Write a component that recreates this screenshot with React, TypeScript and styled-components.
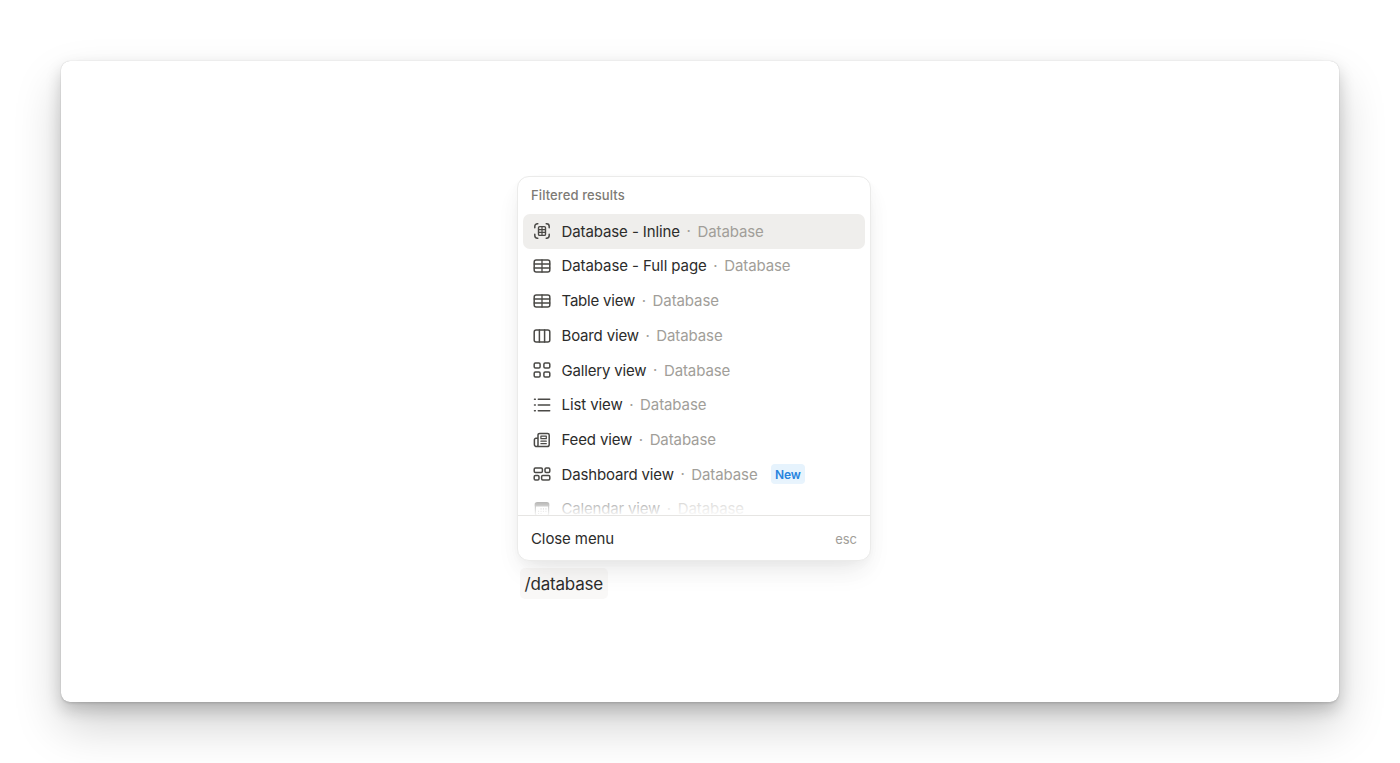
import React from "react";
import styled, { createGlobalStyle } from "styled-components";

const GlobalStyle = createGlobalStyle`
  * { box-sizing: border-box; }
  html, body { margin: 0; padding: 0; background: #fff; overflow: hidden; }
  body { font-family: Inter, "Liberation Sans", sans-serif; color: #2c2c2b; }
`;

const Page = styled.main`
  height: 763px;
  padding: 61px 61px 61px;
  overflow: hidden;
`;

const Window = styled.section`
  height: 641px;
  padding: 115px 0 0 456px;
  border-radius: 9px;
  background: #fff;
  box-shadow: 0 0 1px rgba(0, 0, 0, 0.26), 0 2px 2px rgba(0, 0, 0, 0.07), 0 8px 16px rgba(0, 0, 0, 0.18),
    0 24px 48px rgba(0, 0, 0, 0.18);
`;

const Menu = styled.div`
  display: flex;
  flex-direction: column;
  width: 354px;
  height: 385px;
  border: 1px solid #ebebea;
  border-radius: 12px;
  background: #fff;
  overflow: hidden;
  box-shadow: 0 14px 28px -6px rgba(0, 0, 0, 0.08), 0 4px 12px -2px rgba(0, 0, 0, 0.035),
    0 10px 30px rgba(0, 0, 0, 0.02);
`;

const Results = styled.div`
  position: relative;
  height: 338px;
  padding: 0 5px;
  overflow: hidden;
`;

const Heading = styled.div`
  height: 37px;
  padding: 10px 8px 0;
  font-size: 13px;
  line-height: 17px;
  font-weight: 500;
  letter-spacing: 0.1px;
  color: #7d7a75;
`;

const Row = styled.div<{ $active?: boolean }>`
  display: flex;
  align-items: center;
  height: 34.72px;
  padding: 0 10px;
  border-radius: 7px;
  background: ${(p) => (p.$active ? "#efeeec" : "transparent")};
  font-size: 15px;
  line-height: 20px;
  white-space: nowrap;
`;

const Glyph = styled.svg`
  width: 18px;
  height: 18px;
  margin-right: 10.5px;
  flex: none;
  fill: none;
  stroke: #4a4946;
  stroke-width: 1.5;
  stroke-linecap: round;
  stroke-linejoin: round;
`;

const Label = styled.span<{ $spacing: number }>`
  padding-top: 0.6px;
  letter-spacing: ${(p) => p.$spacing}px;
`;

const Dot = styled.span`
  width: 17.5px;
  text-align: center;
  color: #a19e99;
`;

const Kind = styled.span`
  padding-top: 0.6px;
  color: #a19e99;
  letter-spacing: -0.1px;
`;

const Badge = styled.span`
  margin-left: 13px;
  width: 34.5px;
  height: 20px;
  padding-top: 0.5px;
  text-align: center;
  border-radius: 4px;
  background: #e6f3fd;
  color: #2783de;
  font-size: 12px;
  line-height: 20px;
  font-weight: 600;
  letter-spacing: -0.1px;
`;

const Fade = styled.div`
  position: absolute;
  left: 0;
  right: 0;
  bottom: 0;
  height: 36px;
  background: linear-gradient(to bottom, rgba(255, 255, 255, 0), rgba(255, 255, 255, 0.95) 100%);
`;

const Footer = styled.div`
  display: flex;
  align-items: center;
  justify-content: space-between;
  flex: 1;
  padding: 1px 13px 0;
  border-top: 1px solid #e6e5e3;
  font-size: 15px;
  letter-spacing: -0.1px;
`;

const Shortcut = styled.span`
  font-size: 13px;
  letter-spacing: 0;
  color: #a19e99;
`;

const Command = styled.div`
  display: inline-block;
  height: 31px;
  margin: 7px 0 0 3px;
  padding: 1px 5.5px 0 4.5px;
  border-radius: 5px;
  background: rgba(66, 35, 3, 0.031);
  font-size: 17px;
  line-height: 31px;
  letter-spacing: -0.2px;
`;

const TableIcon = () => (
  <>
    <rect x="1.2" y="3" width="15.6" height="12" rx="2" />
    <path d="M1.2 7h15.6M1.2 11h15.6M9 3v12" strokeWidth="1.3" />
  </>
);

const icons: Record<string, React.ReactNode> = {
  inline: (
    <>
      <path d="M4.8 1.8h-.4A2.6 2.6 0 0 0 1.8 4.4v1.4M1.8 12.2v1.4a2.6 2.6 0 0 0 2.6 2.6h.4M13.2 1.8h.4a2.6 2.6 0 0 1 2.6 2.6v1.4M16.2 12.2v1.4a2.6 2.6 0 0 1-2.6 2.6h-.4" />
      <rect x="5.5" y="4.6" width="7" height="8.8" rx="1.2" strokeWidth="1.4" />
      <path d="M5.5 7.6h7M5.5 10.4h7M9 4.6v8.8" strokeWidth="1.2" />
    </>
  ),
  table: <TableIcon />,
  board: (
    <>
      <rect x="1.2" y="3" width="15.6" height="12" rx="2" />
      <path d="M6.4 3v12M11.6 3v12" />
    </>
  ),
  gallery: (
    <>
      <rect x="1.2" y="2" width="5.9" height="4.9" rx="1.2" />
      <rect x="10.9" y="2" width="5.9" height="4.9" rx="1.2" />
      <rect x="1.2" y="11" width="5.9" height="4.9" rx="1.2" />
      <rect x="10.9" y="11" width="5.9" height="4.9" rx="1.2" />
    </>
  ),
  list: (
    <path d="M1.5 3.2h.8M1.5 9h.8M1.5 14.8h.8M5.3 3.2h11.4M5.3 9h11.4M5.3 14.8h11.4" />
  ),
  feed: (
    <>
      <path d="M5 7.3H3A1.5 1.5 0 0 0 1.4 8.8v4.6a2.2 2.2 0 0 0 2.2 2.2h10.4a2.2 2.2 0 0 0 2.2-2.2V4a1.6 1.6 0 0 0-1.6-1.6H6.6A1.6 1.6 0 0 0 5 4v9.8a1.6 1.6 0 0 1-1.5 1.8" />
      <rect x="7.9" y="5.2" width="5.4" height="2.5" strokeWidth="1.2" />
      <path d="M7.9 10.2h5.4M7.9 12.7h5.4" strokeWidth="1.2" />
    </>
  ),
  dashboard: (
    <>
      <rect x="1.2" y="3" width="8.2" height="4.4" rx="1.2" />
      <rect x="12" y="3" width="4.8" height="4.4" rx="1.2" />
      <rect x="1.2" y="10.6" width="4.8" height="4.4" rx="1.2" />
      <rect x="8.6" y="10.6" width="8.2" height="4.4" rx="1.2" />
    </>
  ),
  calendar: (
    <>
      <rect x="2.4" y="2.7" width="13.2" height="13" rx="2" strokeWidth="1.2" />
      <path d="M2.4 3.4h13.2v2.4H2.4z" fill="#4a4946" strokeWidth="1.2" />
      <path d="M8 8.9h.1M10.4 8.9h.1M12.9 8.9h.1M5.5 11.2h.1M8 11.2h.1M10.4 11.2h.1M12.9 11.2h.1M5.5 13.5h.1M8 13.5h.1" strokeWidth="1.1" />
    </>
  ),
};

const items = [
  { icon: "inline", label: "Database - Inline", spacing: -0.1 },
  { icon: "table", label: "Database - Full page", spacing: -0.08 },
  { icon: "table", label: "Table view", spacing: -0.2 },
  { icon: "board", label: "Board view", spacing: -0.17 },
  { icon: "gallery", label: "Gallery view", spacing: -0.17 },
  { icon: "list", label: "List view", spacing: -0.1 },
  { icon: "feed", label: "Feed view", spacing: -0.15 },
  { icon: "dashboard", label: "Dashboard view", spacing: -0.15, badge: "New" },
  { icon: "calendar", label: "Calendar view", spacing: -0.17 },
];

export default function App() {
  return (
    <>
      <GlobalStyle />
      <Page>
        <Window>
          <Menu>
            <Results>
              <Heading>Filtered results</Heading>
              {items.map((item, i) => (
                <Row key={item.label} $active={i === 0}>
                  <Glyph viewBox="0 0 18 18">{icons[item.icon]}</Glyph>
                  <Label $spacing={item.spacing}>{item.label}</Label>
                  <Dot>·</Dot>
                  <Kind>Database</Kind>
                  {item.badge && <Badge>{item.badge}</Badge>}
                </Row>
              ))}
              <Fade />
            </Results>
            <Footer>
              <span>Close menu</span>
              <Shortcut>esc</Shortcut>
            </Footer>
          </Menu>
          <Command>/database</Command>
        </Window>
      </Page>
    </>
  );
}
